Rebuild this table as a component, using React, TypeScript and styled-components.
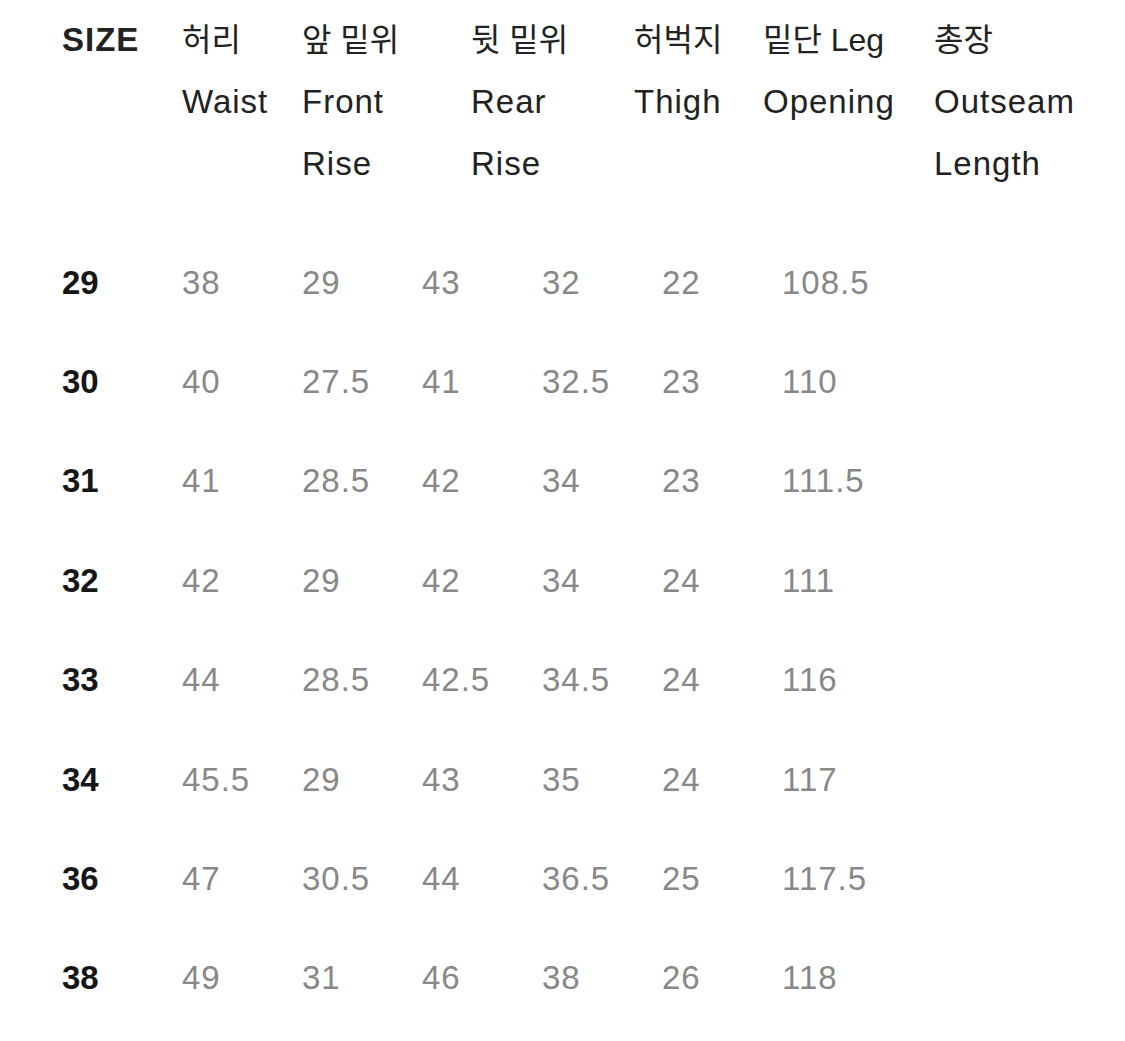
import React from "react";
import styled, { createGlobalStyle } from "styled-components";

const Global = createGlobalStyle`
  html, body { margin: 0; padding: 0; background: #fff; }
  body { font-family: "Liberation Sans", "Noto Sans CJK KR", sans-serif; }
`;

const Page = styled.div`
  padding: 9px 0 0 62px;
  width: 1125px;
  height: 1041px;
  box-sizing: border-box;
  overflow: hidden;
`;

const Header = styled.div`
  display: grid;
  grid-template-columns: 120px 120px 169px 163px 129px 171px auto;
`;

const HeadCell = styled.div<{ $bold?: boolean }>`
  display: flex;
  flex-direction: column;
  line-height: 62px;
  color: #222;
  font-weight: ${(p) => (p.$bold ? 700 : 400)};
  white-space: nowrap;
`;

const HeadLine = styled.span<{ $ko?: boolean }>`
  font-size: ${(p) => (p.$ko ? "32px" : "33px")};
  letter-spacing: ${(p) => (p.$ko ? "0" : "1px")};
`;

const Body = styled.div`
  margin-top: 38px;
  display: flex;
  flex-direction: column;
`;

const Row = styled.div`
  display: grid;
  grid-template-columns: repeat(6, 120px) auto;
  height: 99.4px;
  align-items: center;
  font-size: 33px;
`;

const SizeCell = styled.div`
  font-weight: 700;
  color: #161616;
`;

const Value = styled.div`
  color: #888;
  letter-spacing: 1px;
`;

const headers: { lines: string[]; bold?: boolean }[] = [
  { lines: ["SIZE"], bold: true },
  { lines: ["허리", "Waist"] },
  { lines: ["앞 밑위", "Front", "Rise"] },
  { lines: ["뒷 밑위", "Rear", "Rise"] },
  { lines: ["허벅지", "Thigh"] },
  { lines: ["밑단 Leg", "Opening"] },
  { lines: ["총장", "Outseam", "Length"] },
];

const rows: string[][] = [
  ["29", "38", "29", "43", "32", "22", "108.5"],
  ["30", "40", "27.5", "41", "32.5", "23", "110"],
  ["31", "41", "28.5", "42", "34", "23", "111.5"],
  ["32", "42", "29", "42", "34", "24", "111"],
  ["33", "44", "28.5", "42.5", "34.5", "24", "116"],
  ["34", "45.5", "29", "43", "35", "24", "117"],
  ["36", "47", "30.5", "44", "36.5", "25", "117.5"],
  ["38", "49", "31", "46", "38", "26", "118"],
];

const isKo = (s: string) => /[\uac00-\ud7a3]/.test(s);

export default function App() {
  return (
    <>
      <Global />
      <Page>
        <Header>
          {headers.map((h, i) => (
            <HeadCell key={i} $bold={h.bold}>
              {h.lines.map((l) => (
                <HeadLine key={l} $ko={isKo(l)}>
                  {l}
                </HeadLine>
              ))}
            </HeadCell>
          ))}
        </Header>
        <Body>
          {rows.map((r) => (
            <Row key={r[0]}>
              <SizeCell>{r[0]}</SizeCell>
              {r.slice(1).map((v, i) => (
                <Value key={i}>{v}</Value>
              ))}
            </Row>
          ))}
        </Body>
      </Page>
    </>
  );
}
